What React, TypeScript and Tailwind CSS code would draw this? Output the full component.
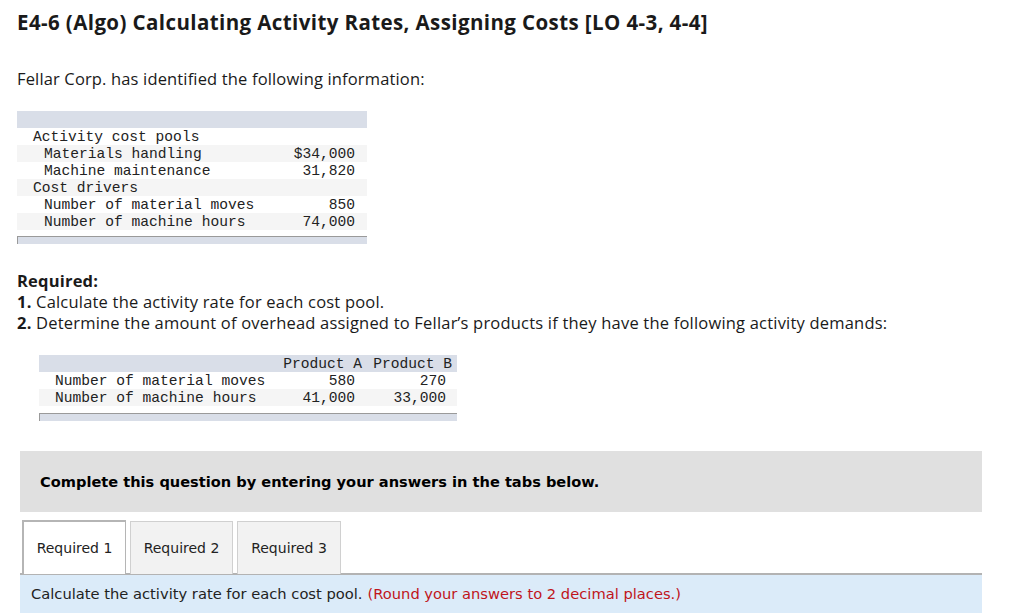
import React from "react";

const mono = "font-['Liberation_Mono',monospace] text-[14.6px] text-[#222]";

function CostTable() {
  const rows: { label: string; value?: string; indent?: boolean; gray?: boolean }[] = [
    { label: "Activity cost pools" },
    { label: "Materials handling", value: "$34,000", indent: true, gray: true },
    { label: "Machine maintenance", value: "31,820", indent: true },
    { label: "Cost drivers", gray: true },
    { label: "Number of material moves", value: "850", indent: true },
    { label: "Number of machine hours", value: "74,000", indent: true, gray: true },
  ];
  return (
    <div className={`w-[350px] ${mono}`}>
      <div className="h-[17px] bg-[#d9dee8]" />
      {rows.map((r) => (
        <div
          key={r.label}
          className={`flex h-[17px] items-center justify-between pt-[2px] leading-[15px] ${
            r.gray ? "bg-[#f5f5f5]" : "bg-white"
          }`}
        >
          <span className={r.indent ? "pl-[27px]" : "pl-[16px]"}>{r.label}</span>
          <span className="pr-[12px]">{r.value}</span>
        </div>
      ))}
      <div className="mt-[6px] h-[8px] border-l border-t border-[#9a9a9a] bg-[#d9dee8]" />
    </div>
  );
}

function DemandTable() {
  return (
    <div className={`ml-[22px] w-[418px] ${mono}`}>
      <div className="flex h-[17px] items-center bg-[#d9dee8] pt-[2px] leading-[15px]">
        <span className="flex-1" />
        <span className="w-[90px] pr-[4px] text-right">Product A</span>
        <span className="w-[91px] pr-[5px] text-right">Product B</span>
      </div>
      {[
        ["Number of material moves", "580", "270", false],
        ["Number of machine hours", "41,000", "33,000", true],
      ].map(([label, a, b, gray]) => (
        <div
          key={label as string}
          className={`flex h-[17px] items-center pt-[2px] leading-[15px] ${gray ? "bg-[#f5f5f5]" : "bg-white"}`}
        >
          <span className="flex-1 pl-[16px]">{label}</span>
          <span className="w-[90px] pr-[11px] text-right">{a}</span>
          <span className="w-[91px] pr-[11px] text-right">{b}</span>
        </div>
      ))}
      <div className="mt-[7px] h-[8px] border-l border-t border-[#9a9a9a] bg-[#d9dee8]" />
    </div>
  );
}

export default function App() {
  return (
    <div className="min-h-[613px] bg-white pl-[17px] pt-[8px] font-['Open_Sans',sans-serif] text-[#1a1a1a]">
      <h1 className="text-[20.5px] font-bold leading-[28px] tracking-[0.4px]">
        E4-6 (Algo) Calculating Activity Rates, Assigning Costs [LO 4-3, 4-4]
      </h1>

      <p className="mt-[32px] text-[16.5px] leading-[22px] tracking-[0.15px]">
        Fellar Corp. has identified the following information:
      </p>

      <div className="mt-[21px]">
        <CostTable />
      </div>

      <div className="mt-[26px] text-[16.5px] leading-[21px] tracking-[0.2px]">
        <p className="font-bold">Required:</p>
        <p>
          <span className="font-bold">1.</span> Calculate the activity rate for each cost pool.
        </p>
        <p>
          <span className="font-bold">2.</span> Determine the amount of overhead assigned to Fellar’s products if they
          have the following activity demands:
        </p>
      </div>

      <div className="mt-[22px]">
        <DemandTable />
      </div>

      <div className="ml-[3px] mt-[30px] flex h-[61px] w-[962px] items-center bg-[#e0e0e0] pl-[20px] font-['DejaVu_Sans',Verdana,sans-serif] text-[14.6px] font-bold text-black">
        Complete this question by entering your answers in the tabs below.
      </div>

      <div className="ml-[3px] w-[962px] font-['DejaVu_Sans',Verdana,sans-serif] text-[14px] text-[#222]">
        <div className="mt-[8px] flex gap-[4px] pl-[2px]">
          <div className="flex h-[54px] w-[104px] items-center justify-center border-l-2 border-r border-t-2 border-[#b5b5b5] bg-white">
            Required 1
          </div>
          <div className="flex h-[53px] w-[103px] items-center justify-center self-end border border-b-0 border-[#d0d0d0] bg-[#f2f2f2]">
            Required 2
          </div>
          <div className="flex h-[53px] w-[104px] items-center justify-center self-end border border-b-0 border-[#d0d0d0] bg-[#f2f2f2]">
            Required 3
          </div>
        </div>
        <div className="-mt-[1px] flex h-[40px] items-center border-t-2 border-[#b3b3b3] bg-[#dbebf9] pl-[11px] text-[14.7px]">
          <span>Calculate the activity rate for each cost pool.</span>
          <span className="ml-[5px] text-[#c0151b]">(Round your answers to 2 decimal places.)</span>
        </div>
      </div>
    </div>
  );
}
